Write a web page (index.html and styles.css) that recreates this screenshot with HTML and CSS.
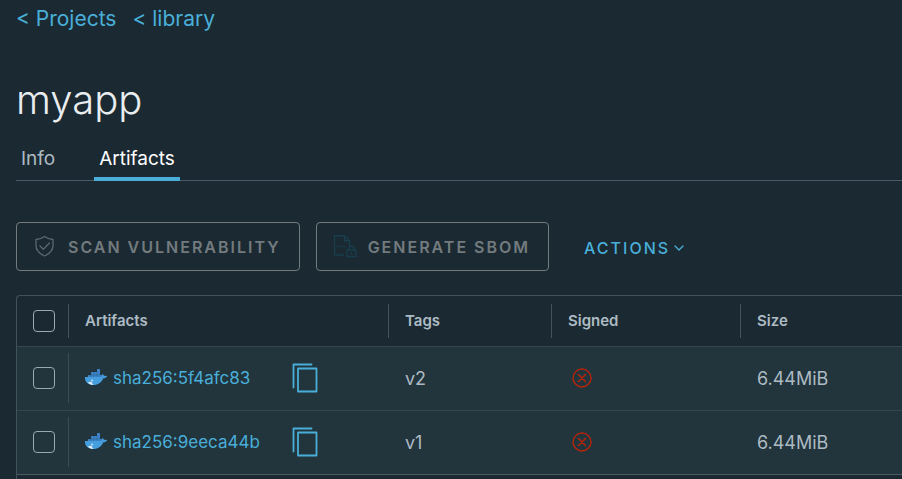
FILE: index.html
```html
<!DOCTYPE html>
<html lang="en">
<head>
    <meta charset="UTF-8">
    <meta name="viewport" content="width=device-width, initial-scale=1.0">
    <title>myapp</title>
    <link rel="stylesheet" href="styles.css">
</head>
<body>
    <svg class="sprite" aria-hidden="true">
        <symbol id="docker" viewBox="0 0 22 18">
            <path fill="#3b83c8" d="M3 6h3v3H3zM6 3h3v6H6zM9 3h3v6H9zM12 0h3v9h-3zM15 6h2v3h-2z"/>
            <path fill="#459fdf" d="M0 8h16c1 0 1.500-1 1-3 1 0 2 1 2 2 1-.4 2-.2 3 .2-.7 1.500-2 2-3.600 2C16.500 13.500 13 16 8.500 16 3 16-.4 13 0 8z"/>
            <path fill="none" d="M6 3v5M9 3v5M12 3v5M3 6h12" stroke="#22333b" stroke-opacity=".4" stroke-width=".5"/>
            <path fill="#e4edf3" d="M2.500 13c1.500.3 3 .2 4-.3.3 1.300 1 2.400 2 3.200-2.500.1-4.600-.9-6-2.900z"/>
            <circle cx="7" cy="11.500" r=".9" fill="#d3e8f4"/>
        </symbol>
        <symbol id="copy" viewBox="0 0 26 30">
            <path fill="none" stroke="currentColor" stroke-width="1.800" stroke-linecap="round" stroke-linejoin="round" d="M1.500 24.500V1.500h18M6 5.500h18.500v23H6z"/>
        </symbol>
        <symbol id="unsigned" viewBox="0 0 20 20">
            <path fill="none" stroke="currentColor" stroke-width="1.500" stroke-linecap="round" d="M6.500 6.500l7 7M13.500 6.500l-7 7"/>
            <circle cx="10" cy="10" r="9" fill="none" stroke="currentColor" stroke-width="1.400"/>
        </symbol>
    </svg>

    <main class="page">
        <nav class="breadcrumb">
            <a href="#">&lt; Projects</a>
            <a href="#">&lt; library</a>
        </nav>

        <h1>myapp</h1>

        <nav class="tabs">
            <a href="#" class="tab">Info</a>
            <a href="#" class="tab active">Artifacts</a>
        </nav>

        <div class="toolbar">
            <button class="btn" disabled>
                <svg class="btn-icon" viewBox="0 0 24 24" fill="none" stroke="#596970" stroke-width="1.300" stroke-linejoin="round" stroke-linecap="round">
                    <path d="M11.500 1.500c2.500 1.800 5.300 2.800 8.500 3v6c0 5-3.500 8.300-8.500 10.500C6.500 18.800 3 15.500 3 10.500v-6c3.200-.2 6-1.200 8.500-3z"/>
                    <path d="M7 11l3.300 3.200L16.500 8"/>
                </svg>
                Scan vulnerability
            </button>
            <button class="btn" disabled>
                <svg class="btn-icon" viewBox="0 0 24 24" fill="none" stroke="#193d4c" stroke-width="1.400">
                    <path d="M11 20H1.500V.7h10l5 5V12M11.500.7v5h5"/>
                    <path d="M3 11.500h10" stroke-dasharray="1.500 1"/>
                    <path d="M14 15h9v6.500h-9zM16 15v-1.500a2.500 2.500 0 0 1 5 0V15M18.500 17v2.500"/>
                </svg>
                Generate SBOM
            </button>
            <button class="btn-link">
                Actions
                <svg class="caret" viewBox="0 0 10 6" fill="none" stroke="currentColor" stroke-width="1.300" stroke-linecap="round">
                    <path d="M1 1l4 4 4-4"/>
                </svg>
            </button>
        </div>

        <div class="datagrid">
            <table>
                <colgroup>
                    <col class="col-check">
                    <col class="col-artifact">
                    <col class="col-tags">
                    <col class="col-signed">
                    <col>
                </colgroup>
                <thead>
                    <tr>
                        <th><input type="checkbox" aria-label="Select all"></th>
                        <th>Artifacts</th>
                        <th>Tags</th>
                        <th>Signed</th>
                        <th>Size</th>
                    </tr>
                </thead>
                <tbody>
                    <tr>
                        <td><input type="checkbox" aria-label="Select sha256:5f4afc83"></td>
                        <td>
                            <div class="artifact">
                                <svg class="docker"><use href="#docker"/></svg>
                                <a href="#" class="digest">sha256:5f4afc83</a>
                                <button class="copy" aria-label="Copy digest"><svg><use href="#copy"/></svg></button>
                            </div>
                        </td>
                        <td>v2</td>
                        <td><svg class="unsigned"><use href="#unsigned"/></svg></td>
                        <td>6.44MiB</td>
                    </tr>
                    <tr>
                        <td><input type="checkbox" aria-label="Select sha256:9eeca44b"></td>
                        <td>
                            <div class="artifact">
                                <svg class="docker"><use href="#docker"/></svg>
                                <a href="#" class="digest">sha256:9eeca44b</a>
                                <button class="copy" aria-label="Copy digest"><svg><use href="#copy"/></svg></button>
                            </div>
                        </td>
                        <td>v1</td>
                        <td><svg class="unsigned"><use href="#unsigned"/></svg></td>
                        <td>6.44MiB</td>
                    </tr>
                </tbody>
            </table>
        </div>
    </main>
</body>
</html>
```

FILE: styles.css
```css
* {
    margin: 0;
    padding: 0;
    box-sizing: border-box;
}

:root {
    --bg: #1b2a32;
    --row-bg: #22343c;
    --line: #42515b;
    --row-line: #34464f;
    --link: #49afd9;
    --text: #adbbc4;
    --muted: #737b7f;
}

body {
    background-color: var(--bg);
    color: var(--text);
    font-family: Inter, "Liberation Sans", sans-serif;
    font-size: 18px;
}

a {
    color: var(--link);
    text-decoration: none;
}

svg {
    display: block;
}

.sprite {
    display: none;
}

.page {
    padding: 5px 0 0 16px;
}

.breadcrumb {
    display: flex;
    gap: 16px;
    font-size: 21px;
    line-height: 28px;
}

h1 {
    margin-top: 43px;
    color: #eaedf0;
    font-size: 40px;
    font-weight: 300;
    line-height: 48px;
}

.tabs {
    display: flex;
    gap: 34px;
    margin-top: 17px;
    border-bottom: 1px solid #485969;
}

.tab {
    padding: 4px 5px 7px;
    color: var(--text);
    line-height: 28px;
    font-size: 19px;
}

.tab.active {
    color: #fff;
    box-shadow: inset 0 -4px 0 var(--link);
    margin-bottom: -1px;
}

.toolbar {
    display: flex;
    gap: 16px;
    margin-top: 41px;
}

.btn,
.btn-link {
    display: flex;
    align-items: center;
    height: 49px;
    background: none;
    border: 1px solid var(--muted);
    border-radius: 4px;
    color: var(--muted);
    font-family: inherit;
    font-size: 16px;
    font-weight: 600;
    letter-spacing: 2px;
    text-transform: uppercase;
    white-space: nowrap;
}

.btn {
    gap: 11px;
    padding: 0 18px 0 16px;
}

.btn-icon {
    width: 24px;
    height: 24px;
}

.btn-link {
    gap: 4px;
    padding: 2px 18px 0;
    border-color: transparent;
    color: var(--link);
    font-weight: 500;
    cursor: pointer;
}

.caret {
    width: 10px;
    height: 6px;
}

.datagrid {
    margin-top: 24px;
    padding-bottom: 4px;
    border: solid var(--line);
    border-width: 1px 0 0 1px;
    border-radius: 4px 0 0 0;
}

table {
    width: 100%;
    table-layout: fixed;
    border-collapse: collapse;
}

.col-check {
    width: 52px;
}

.col-artifact {
    width: 320px;
}

.col-tags {
    width: 163px;
}

.col-signed {
    width: 189px;
}

th,
td {
    padding-left: 16px;
    border-bottom: 1px solid var(--row-line);
    text-align: left;
    vertical-align: middle;
}

th {
    height: 50px;
    font-size: 15px;
    font-weight: 600;
}

td {
    height: 64px;
    background-color: var(--row-bg);
}

tbody tr:last-child td {
    border-bottom-color: #4c5c67;
}

/* short column separators */
th:not(:last-child) {
    background: linear-gradient(#42515b, #42515b) right center / 1px 34px no-repeat;
}

td:first-child {
    background-image: linear-gradient(#3a4c55, #3a4c55);
    background-position: right center;
    background-size: 1px 50px;
    background-repeat: no-repeat;
}

input[type="checkbox"] {
    display: block;
    width: 22px;
    height: 22px;
    appearance: none;
    border: 1px solid #9aa8b0;
    border-radius: 4px;
}

.artifact {
    display: flex;
    align-items: center;
}

.docker {
    width: 22px;
    height: 18px;
    margin-right: 6px;
}

.digest {
    width: 179px;
    font-size: 17px;
}

.copy {
    background: none;
    border: none;
    color: var(--link);
    cursor: pointer;
}

.copy svg {
    width: 26px;
    height: 30px;
}

.unsigned {
    width: 20px;
    height: 20px;
    margin-left: 4px;
    color: #b5250b;
}
```
